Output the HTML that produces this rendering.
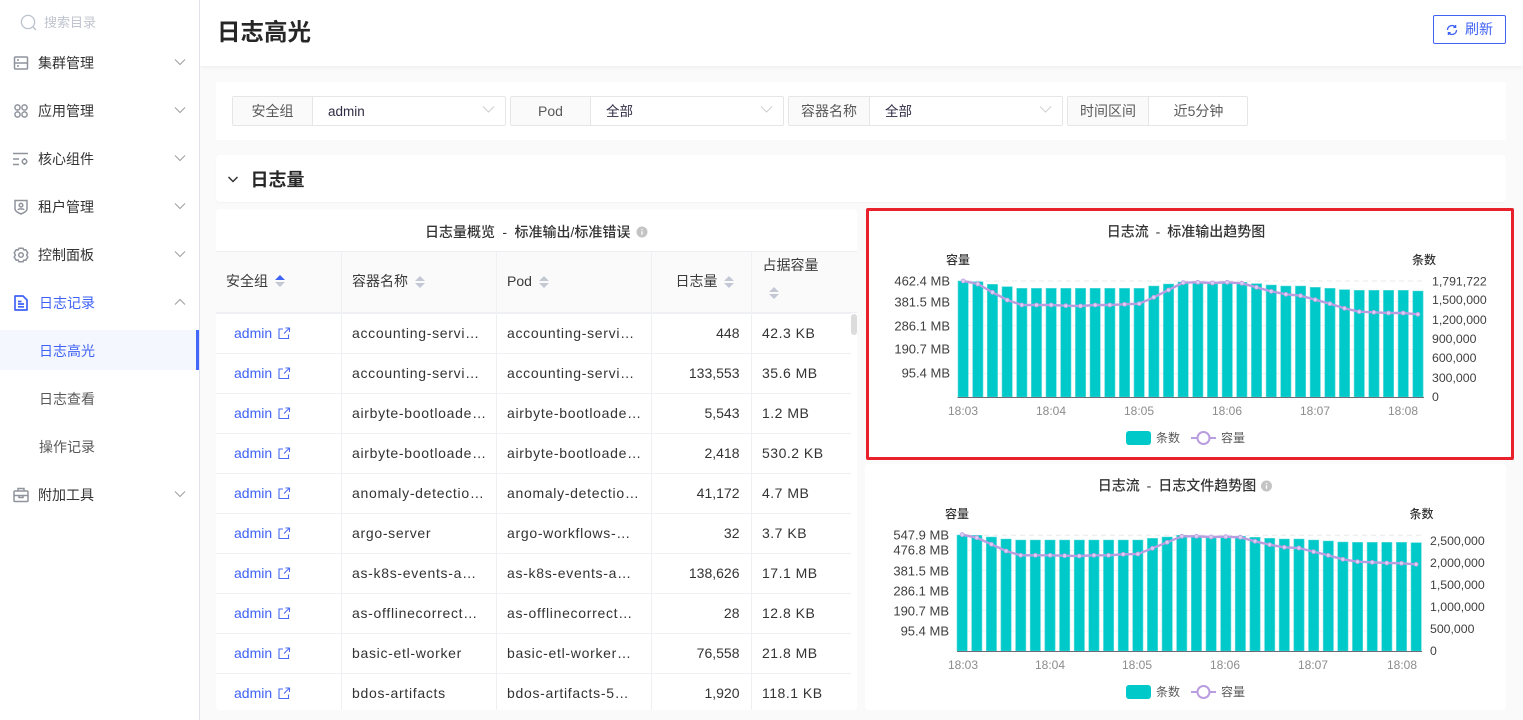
<!DOCTYPE html>
<html lang="zh-CN">
<head>
<meta charset="utf-8">
<title>日志高光</title>
<style>
*{box-sizing:border-box}
html,body{margin:0;padding:0;width:1523px;height:720px;overflow:hidden;background:#fafafa;font-family:"Liberation Sans","Noto Sans CJK SC",sans-serif;font-size:14px;color:#333}
.abs{position:absolute}
#side{left:0;top:0;width:200px;height:720px;background:#fff;border-right:1px solid #e1e3ec}
.mi{position:absolute;left:38px;width:120px;height:24px;line-height:24px;font-size:14px;color:#333;white-space:nowrap}
.ic{position:absolute;left:13px;width:16px;height:16px;fill:none;stroke:#8f939c;stroke-width:1.5}
.cv{position:absolute;left:174px;width:12px;height:8px;fill:none;stroke:#a0a0a0;stroke-width:1.1}
#head{left:200px;top:0;width:1323px;height:66px;background:#fff;box-shadow:0 1px 4px rgba(0,0,0,.06)}
#head h1{position:absolute;left:17px;top:14px;margin:0;font-size:23.5px;line-height:36px;font-weight:600;color:#262626}
#refresh{left:1433px;top:15px;width:73px;height:29px;border:1px solid #3f62f5;border-radius:2px;background:#fff;color:#3f62f5;line-height:27px;padding-left:31px;font-size:14px}
.panel{position:absolute;background:#fff}
.g{position:absolute;top:96px;height:30px;border:1px solid #e6e6e6;border-radius:2px;background:#fff;font-size:14px;line-height:28px}
.g b{position:absolute;left:0;top:0;bottom:0;font-weight:400;background:#fafafa;border-right:1px solid #e6e6e6;text-align:center;color:#595959}
.g i{position:absolute;top:1px;font-style:normal;color:#2e2b45;font-size:13.5px}
.g svg{position:absolute;top:8px;width:13px;height:9px;fill:none;stroke:#cfcfcf;stroke-width:1}
table{position:absolute;left:216px;top:251px;width:635px;border-collapse:collapse;table-layout:fixed;font-size:14px}
th{height:62px;padding:0 0 2px;font-weight:400;text-align:left;border-right:1px solid #eef0f4;border-bottom:1px solid #eef0f4;position:relative;color:#3a3a3a;white-space:nowrap}
td{height:40px;padding:0;border-right:1px solid #eef0f4;border-bottom:1px solid #eef0f4;white-space:nowrap;overflow:hidden;color:#333}
.c2{padding-left:10.5px}
td.c2{letter-spacing:.7px}
.c4{text-align:right;padding-right:11px}
.c5{padding-left:10.5px;border-right:0}
td.c5{letter-spacing:.5px}
.l{color:#3f62f5;padding-left:18px}
.l svg{width:12px;height:12px;margin-left:6px;vertical-align:-1px;fill:none;stroke:#4a6cf2;stroke-width:1.1}
.s{position:absolute;width:10px;height:12px}
text{font-family:"Liberation Sans","Noto Sans CJK SC",sans-serif}
</style>
</head>
<body>

<div class="abs" id="head"><h1>日志高光</h1></div>
<div class="abs" id="refresh">刷新
<svg style="position:absolute;left:12px;top:8px;width:12px;height:12px;fill:none;stroke:#3f62f5;stroke-width:1.3" viewBox="0 0 12 12"><path d="M1.5 6a4.5 4.5 0 0 1 7.8-3M10.5 6a4.5 4.5 0 0 1-7.8 3"/><path d="M9.6 1v2.3H7.4M2.4 11V8.7h2.2"/></svg></div>

<div class="abs" id="side">
  <svg class="abs" style="left:20px;top:14px;width:17px;height:17px;fill:none;stroke:#bcc2cd;stroke-width:1.3" viewBox="0 0 17 17"><circle cx="8" cy="8" r="6.600"/><path d="M13 13l3 3"/></svg>
  <div class="abs" style="left:44px;top:13px;font-size:13px;line-height:20px;color:#c0c4ce">搜索目录</div>

  <svg class="ic" style="top:55px" viewBox="0 0 16 16"><rect x="1.500" y="2" width="13" height="12" rx="1"/><path d="M1.500 8h13M4 5h2M4 11h2"/></svg>
  <div class="mi" style="top:51px">集群管理</div>
  <svg class="cv" style="top:58px" viewBox="0 0 12 8"><path d="M1 1.500l5 5 5-5"/></svg>

  <svg class="ic" style="top:103px" viewBox="0 0 16 16"><circle cx="4.500" cy="4.500" r="2.600"/><circle cx="11.500" cy="4.500" r="2.600"/><circle cx="4.500" cy="11.500" r="2.600"/><circle cx="11.500" cy="11.500" r="2.600"/></svg>
  <div class="mi" style="top:99px">应用管理</div>
  <svg class="cv" style="top:106px" viewBox="0 0 12 8"><path d="M1 1.500l5 5 5-5"/></svg>

  <svg class="ic" style="top:151px" viewBox="0 0 16 16"><path d="M0 2.500h15M0 8h6M0 13.500h6"/><circle cx="11.500" cy="10.500" r="2.200"/><path d="M11.500 7v1.200M11.500 12.800V14M8.500 10.500h.8M13.700 10.500h.8"/></svg>
  <div class="mi" style="top:147px">核心组件</div>
  <svg class="cv" style="top:154px" viewBox="0 0 12 8"><path d="M1 1.500l5 5 5-5"/></svg>

  <svg class="ic" style="top:199px" viewBox="0 0 16 16"><path d="M2 1.500h12v8.500c0 2-3 3.800-6 5-3-1.200-6-3-6-5z"/><circle cx="8" cy="6.200" r="1.800"/><path d="M5 11c.5-1.500 5.500-1.500 6 0"/></svg>
  <div class="mi" style="top:195px">租户管理</div>
  <svg class="cv" style="top:202px" viewBox="0 0 12 8"><path d="M1 1.500l5 5 5-5"/></svg>

  <svg class="ic" style="top:247px" viewBox="0 0 16 16"><path d="M6 1.200h4l.8 1.800 2-.3 2 3.300-1.200 2 1.200 2-2 3.300-2-.3-.8 1.800H6l-.8-1.800-2 .3-2-3.300 1.200-2-1.200-2 2-3.300 2 .3z" stroke-linejoin="round"/><circle cx="8" cy="8" r="2.300"/></svg>
  <div class="mi" style="top:243px">控制面板</div>
  <svg class="cv" style="top:250px" viewBox="0 0 12 8"><path d="M1 1.500l5 5 5-5"/></svg>

  <svg class="ic" style="top:295px;stroke:#3f62f5;stroke-width:1.700" viewBox="0 0 16 16"><path d="M2 1h8l4 4v10H2z" stroke-linejoin="round"/><path d="M5 6.500h3.500M5 9h6M5 11.800h6"/></svg>
  <div class="mi" style="top:291px;left:39px;color:#3f62f5">日志记录</div>
  <svg class="cv" style="top:298px" viewBox="0 0 12 8"><path d="M1 6.500l5-5 5 5"/></svg>

  <div class="abs" style="left:0;top:330px;width:199px;height:40px;background:#f5f7fe"></div>
  <div class="abs" style="left:196px;top:330px;width:3px;height:40px;background:#4467fb"></div>
  <div class="mi" style="top:339px;left:39px;color:#3f62f5">日志高光</div>
  <div class="mi" style="top:387px;left:39px;color:#595959">日志查看</div>
  <div class="mi" style="top:435px;left:39px;color:#595959">操作记录</div>

  <svg class="ic" style="top:487px" viewBox="0 0 16 16"><rect x="1" y="4" width="14" height="10.500" rx="1"/><path d="M5 4V1.500h6V4M1 8.500h14M6 8.500v2h4v-2"/></svg>
  <div class="mi" style="top:483px">附加工具</div>
  <svg class="cv" style="top:490px" viewBox="0 0 12 8"><path d="M1 1.500l5 5 5-5"/></svg>
</div>

<div class="panel" style="left:216px;top:82px;width:1290px;height:58px"></div>

<div class="g" style="left:232px;width:274px"><b style="width:80px">安全组</b><i style="left:95px">admin</i><svg style="left:249px" viewBox="0 0 13 9"><path d="M1 1.500l5.500 5.500L12 1.500"/></svg></div>
<div class="g" style="left:510px;width:274px"><b style="width:80px">Pod</b><i style="left:95px">全部</i><svg style="left:249px" viewBox="0 0 13 9"><path d="M1 1.500l5.500 5.500L12 1.500"/></svg></div>
<div class="g" style="left:788px;width:275px"><b style="width:81px">容器名称</b><i style="left:96px">全部</i><svg style="left:250px" viewBox="0 0 13 9"><path d="M1 1.500l5.500 5.500L12 1.500"/></svg></div>
<div class="g" style="left:1067px;width:181px"><b style="width:81px">时间区间</b><i style="left:81px;width:99px;text-align:center;color:#595959;font-size:14px;top:0">近5分钟</i></div>

<div class="panel" style="left:216px;top:155px;width:1290px;height:47px;border-radius:4px;box-shadow:0 1px 2px rgba(0,0,0,.03)"></div>
<svg class="abs" style="left:227px;top:175px;width:12px;height:9px;fill:none;stroke:#333;stroke-width:1.500" viewBox="0 0 12 9"><path d="M1.500 2l4.500 4.500L10.500 2"/></svg>
<div class="abs" style="left:250.500px;top:167px;font-size:18px;line-height:27px;font-weight:600;color:#262626">日志量</div>

<div class="panel" style="left:216px;top:209px;width:641px;height:501px;border-radius:4px;overflow:hidden"></div>
<div class="abs" style="left:425px;top:222px;font-size:14px;line-height:20px;font-weight:500;color:#333;white-space:nowrap;word-spacing:3.500px">日志量概览 - 标准输出/标准错误</div>
<svg class="abs" style="left:636px;top:226px;width:12px;height:12px" viewBox="0 0 12 12"><circle cx="6" cy="6" r="5.500" fill="#c4c4c4"/><path d="M6 5.200v3.600M6 3v1.100" stroke="#fff" stroke-width="1.300"/></svg>

<div class="abs" style="left:216px;top:251px;width:641px;height:62px;background:#fafafa;border-top:1px solid #eef0f4;border-bottom:1px solid #eef0f4"></div>

<div class="abs" style="left:216px;top:251px;width:641px;height:459px;overflow:hidden">
<table style="left:0;top:0">
<colgroup><col style="width:125px"><col style="width:155px"><col style="width:155px"><col style="width:100px"><col style="width:100px"></colgroup>
<thead><tr>
<th style="padding-left:10px">安全组</th>
<th class="c2">容器名称</th>
<th class="c2">Pod</th>
<th class="c4" style="padding-right:33px">日志量</th>
<th class="c5" style="vertical-align:top;padding-top:4px;padding-left:11px">占据容量</th>
</tr></thead>
<tbody>
<tr><td class="l">admin<svg viewBox="0 0 12 12"><path d="M5 2H1v9.500h9.500V7.500M6 6.500L11 1.500M7.500 1H11.500V5"/></svg></td><td class="c2">accounting-servi…</td><td class="c2">accounting-servi…</td><td class="c4">448</td><td class="c5">42.3 KB</td></tr>
<tr><td class="l">admin<svg viewBox="0 0 12 12"><path d="M5 2H1v9.500h9.500V7.500M6 6.500L11 1.500M7.500 1H11.500V5"/></svg></td><td class="c2">accounting-servi…</td><td class="c2">accounting-servi…</td><td class="c4">133,553</td><td class="c5">35.6 MB</td></tr>
<tr><td class="l">admin<svg viewBox="0 0 12 12"><path d="M5 2H1v9.500h9.500V7.500M6 6.500L11 1.500M7.500 1H11.500V5"/></svg></td><td class="c2">airbyte-bootloade…</td><td class="c2">airbyte-bootloade…</td><td class="c4">5,543</td><td class="c5">1.2 MB</td></tr>
<tr><td class="l">admin<svg viewBox="0 0 12 12"><path d="M5 2H1v9.500h9.500V7.500M6 6.500L11 1.500M7.500 1H11.500V5"/></svg></td><td class="c2">airbyte-bootloade…</td><td class="c2">airbyte-bootloade…</td><td class="c4">2,418</td><td class="c5">530.2 KB</td></tr>
<tr><td class="l">admin<svg viewBox="0 0 12 12"><path d="M5 2H1v9.500h9.500V7.500M6 6.500L11 1.500M7.500 1H11.500V5"/></svg></td><td class="c2">anomaly-detectio…</td><td class="c2">anomaly-detectio…</td><td class="c4">41,172</td><td class="c5">4.7 MB</td></tr>
<tr><td class="l">admin<svg viewBox="0 0 12 12"><path d="M5 2H1v9.500h9.500V7.500M6 6.500L11 1.500M7.500 1H11.500V5"/></svg></td><td class="c2">argo-server</td><td class="c2">argo-workflows-…</td><td class="c4">32</td><td class="c5">3.7 KB</td></tr>
<tr><td class="l">admin<svg viewBox="0 0 12 12"><path d="M5 2H1v9.500h9.500V7.500M6 6.500L11 1.500M7.500 1H11.500V5"/></svg></td><td class="c2">as-k8s-events-a…</td><td class="c2">as-k8s-events-a…</td><td class="c4">138,626</td><td class="c5">17.1 MB</td></tr>
<tr><td class="l">admin<svg viewBox="0 0 12 12"><path d="M5 2H1v9.500h9.500V7.500M6 6.500L11 1.500M7.500 1H11.500V5"/></svg></td><td class="c2">as-offlinecorrect…</td><td class="c2">as-offlinecorrect…</td><td class="c4">28</td><td class="c5">12.8 KB</td></tr>
<tr><td class="l">admin<svg viewBox="0 0 12 12"><path d="M5 2H1v9.500h9.500V7.500M6 6.500L11 1.500M7.500 1H11.500V5"/></svg></td><td class="c2">basic-etl-worker</td><td class="c2">basic-etl-worker…</td><td class="c4">76,558</td><td class="c5">21.8 MB</td></tr>
<tr><td class="l">admin<svg viewBox="0 0 12 12"><path d="M5 2H1v9.500h9.500V7.500M6 6.500L11 1.500M7.500 1H11.500V5"/></svg></td><td class="c2">bdos-artifacts</td><td class="c2">bdos-artifacts-5…</td><td class="c4">1,920</td><td class="c5">118.1 KB</td></tr>
</tbody>
</table>
</div>
<div class="abs" style="left:851px;top:314px;width:6px;height:21px;border-radius:3px;background:#dcdcdc"></div>

<svg class="s" style="left:275px;top:275px" viewBox="0 0 10 12"><path d="M5 0l5 5H0z" fill="#3f62f5"/><path d="M5 12l5-5H0z" fill="#c3c8d4"/></svg>
<svg class="s" style="left:415px;top:276px" viewBox="0 0 10 12"><path d="M5 0l5 5H0zM5 12l5-5H0z" fill="#c3c8d4"/></svg>
<svg class="s" style="left:539px;top:276px" viewBox="0 0 10 12"><path d="M5 0l5 5H0zM5 12l5-5H0z" fill="#c3c8d4"/></svg>
<svg class="s" style="left:724px;top:276px" viewBox="0 0 10 12"><path d="M5 0l5 5H0zM5 12l5-5H0z" fill="#c3c8d4"/></svg>
<svg class="s" style="left:769px;top:287px" viewBox="0 0 10 12"><path d="M5 0l5 5H0zM5 12l5-5H0z" fill="#c3c8d4"/></svg>

<div class="panel" style="left:865px;top:464px;width:641px;height:246px;border-radius:4px"></div>
<div class="abs" style="left:866px;top:208px;width:648px;height:252px;background:#fff;border:3.500px solid #e8212a;border-radius:2px"></div>

<svg class="abs" style="left:0;top:0;width:1523px;height:720px" viewBox="0 0 1523 720">
<defs>
<marker id="dot" markerUnits="userSpaceOnUse" markerWidth="7" markerHeight="7" refX="3.500" refY="3.500" viewBox="0 0 7 7"><circle cx="3.500" cy="3.500" r="2" fill="#dccdf1" stroke="#b99de0" stroke-width=".8"/></marker>
</defs>

<!-- chart 1 -->
<text x="1186" y="236.500" text-anchor="middle" font-size="14" font-weight="500" fill="#333" word-spacing="3">日志流 - 标准输出趋势图</text>
<text x="958" y="264" text-anchor="middle" font-size="12" font-weight="500" fill="#333">容量</text>
<text x="1424" y="264" text-anchor="middle" font-size="12" font-weight="500" fill="#333">条数</text>
<path d="M958 281H1424" stroke="#e8e8e8" stroke-dasharray="5 4"/>
<path d="M958 301.500H1424M958 325.500H1424M958 349.500H1424M958 373.500H1424" stroke="#f2f2f2"/>
<path fill="#00c9c9" stroke="#5fdcdc" stroke-width=".6" d="M958 397V281h10.300V397zM972.700 397V281.700h10.300V397zM987.300 397V284.300h10.300V397zM1002 397V286.700h10.300V397zM1016.700 397V288.300h10.300V397zM1031.300 397V288.300h10.300V397zM1046 397V288.300h10.300V397zM1060.700 397V288.300h10.300V397zM1075.400 397V288.300h10.300V397zM1090 397V288.300h10.300V397zM1104.700 397V288.300h10.300V397zM1119.400 397V288.300h10.300V397zM1134 397V288.300h10.300V397zM1148.700 397V286h10.300V397zM1163.400 397V284h10.300V397zM1178 397V282h10.300V397zM1192.700 397V282.300h10.300V397zM1207.400 397V282.300h10.300V397zM1222.100 397V282.300h10.300V397zM1236.700 397V282.300h10.300V397zM1251.400 397V283.700h10.300V397zM1266.100 397V285h10.300V397zM1280.700 397V286h10.300V397zM1295.400 397V286h10.300V397zM1310.100 397V287.300h10.300V397zM1324.800 397V288.300h10.300V397zM1339.400 397V289.700h10.300V397zM1354.100 397V290.300h10.300V397zM1368.800 397V290.300h10.300V397zM1383.400 397V290.300h10.300V397zM1398.100 397V290.300h10.300V397zM1412.800 397V291h10.300V397z"/>
<path d="M957.500 397.500H1424" stroke="#6b6b75"/>
<polyline fill="none" stroke="#b99de0" stroke-width="2.400" stroke-linejoin="round" marker-start="url(#dot)" marker-mid="url(#dot)" marker-end="url(#dot)" points="963.200,281 977.800,284 992.500,292.300 1007.200,300 1021.800,305 1036.500,305 1051.200,305 1065.800,305.700 1080.500,306 1095.200,305 1109.800,305 1124.500,304.300 1139.200,303.700 1153.800,297.300 1168.500,290 1183.200,282.700 1197.900,282.300 1212.500,283 1227.200,282.300 1241.900,283.300 1256.500,287.300 1271.200,291.300 1285.900,294.300 1300.500,295.700 1315.200,299.700 1329.900,303.700 1344.500,308.300 1359.200,311.700 1373.900,312.300 1388.500,313 1403.200,313 1417.900,314.300"/>
<g font-size="13" fill="#404040" text-anchor="end">
<text x="950" y="285.500">462.4 MB</text><text x="950" y="306.500">381.5 MB</text><text x="950" y="330.500">286.1 MB</text><text x="950" y="353.500">190.7 MB</text><text x="950" y="377.500">95.4 MB</text>
</g>
<g font-size="12.300" fill="#404040">
<text x="1432" y="285.500">1,791,722</text><text x="1432" y="304">1,500,000</text><text x="1432" y="324">1,200,000</text><text x="1432" y="343">900,000</text><text x="1432" y="362">600,000</text><text x="1432" y="382">300,000</text><text x="1432" y="401">0</text>
</g>
<g font-size="12" fill="#8c8c8c" text-anchor="middle">
<text x="963" y="415">18:03</text><text x="1051" y="415">18:04</text><text x="1139" y="415">18:05</text><text x="1227" y="415">18:06</text><text x="1315" y="415">18:07</text><text x="1403" y="415">18:08</text>
</g>
<rect x="1126" y="431" width="25" height="14" rx="3" fill="#00c9c9"/>
<text x="1156" y="442" font-size="12" fill="#595959">条数</text>
<path d="M1191 438H1216" stroke="#b99de0" stroke-width="2"/><circle cx="1203.500" cy="438" r="6" fill="#fff" stroke="#b99de0" stroke-width="2"/>
<text x="1221" y="442" font-size="12" fill="#595959">容量</text>

<!-- chart 2 -->
<text x="1177" y="490.500" text-anchor="middle" font-size="14" font-weight="500" fill="#333" word-spacing="3">日志流 - 日志文件趋势图</text>
<circle cx="1266.500" cy="486" r="5.500" fill="#c4c4c4"/><path d="M1266.500 485.200v3.600M1266.500 483v1.100" stroke="#fff" stroke-width="1.300"/>
<text x="957" y="518" text-anchor="middle" font-size="12" font-weight="500" fill="#333">容量</text>
<text x="1421.500" y="518" text-anchor="middle" font-size="12" font-weight="500" fill="#333">条数</text>
<path d="M957 535.300H1422" stroke="#e8e8e8" stroke-dasharray="5 4"/>
<path d="M957 550.500H1422M957 570.500H1422M957 590.500H1422M957 610.500H1422M957 631H1422" stroke="#f2f2f2"/>
<g transform="translate(-1 0) translate(958 0) scale(.9983 1) translate(-958 0)">
<path fill="#00c9c9" stroke="#5fdcdc" stroke-width=".6" d="M958 651V535h10.300V651zM972.700 651V535.300h10.300V651zM987.300 651V537h10.300V651zM1002 651V539h10.300V651zM1016.700 651V540h10.300V651zM1031.300 651V540h10.300V651zM1046 651V540h10.300V651zM1060.700 651V540h10.300V651zM1075.400 651V540h10.300V651zM1090 651V540h10.300V651zM1104.700 651V540h10.300V651zM1119.400 651V540h10.300V651zM1134 651V540h10.300V651zM1148.700 651V538.300h10.300V651zM1163.400 651V537h10.300V651zM1178 651V535.300h10.300V651zM1192.700 651V536h10.300V651zM1207.400 651V536.300h10.300V651zM1222.100 651V536.300h10.300V651zM1236.700 651V536.300h10.300V651zM1251.400 651V537.300h10.300V651zM1266.100 651V538.300h10.300V651zM1280.700 651V539h10.300V651zM1295.400 651V539h10.300V651zM1310.100 651V540h10.300V651zM1324.800 651V541h10.300V651zM1339.400 651V542h10.300V651zM1354.100 651V542.300h10.300V651zM1368.800 651V542.300h10.300V651zM1383.400 651V542.300h10.300V651zM1398.100 651V542.300h10.300V651zM1412.800 651V542.700h10.300V651z"/>
<polyline fill="none" stroke="#b99de0" stroke-width="2.400" stroke-linejoin="round" marker-start="url(#dot)" marker-mid="url(#dot)" marker-end="url(#dot)" points="963.200,534.700 977.800,537.700 992.500,544.300 1007.200,551 1021.800,555.300 1036.500,555.300 1051.200,555.300 1065.800,555.700 1080.500,556 1095.200,555.300 1109.800,555.300 1124.500,554.300 1139.200,554 1153.800,548.300 1168.500,542.300 1183.200,536.300 1197.900,536.300 1212.500,537 1227.200,536.700 1241.900,537.300 1256.500,541.300 1271.200,544.700 1285.900,547.300 1300.500,548 1315.200,551.700 1329.900,555.300 1344.500,559.300 1359.200,561.700 1373.900,562.300 1388.500,563 1403.200,563.300 1417.900,564.300"/>
</g>
<path d="M957 651.500H1422" stroke="#6b6b75"/>
<g font-size="13" fill="#404040" text-anchor="end">
<text x="949" y="539.500">547.9 MB</text><text x="949" y="554.500">476.8 MB</text><text x="949" y="575.500">381.5 MB</text><text x="949" y="595.500">286.1 MB</text><text x="949" y="615.500">190.7 MB</text><text x="949" y="635.500">95.4 MB</text>
</g>
<g font-size="12.300" fill="#404040">
<text x="1430" y="545">2,500,000</text><text x="1430" y="567">2,000,000</text><text x="1430" y="589">1,500,000</text><text x="1430" y="611">1,000,000</text><text x="1430" y="633">500,000</text><text x="1430" y="655">0</text>
</g>
<g font-size="12" fill="#8c8c8c" text-anchor="middle">
<text x="963" y="669">18:03</text><text x="1050" y="669">18:04</text><text x="1137" y="669">18:05</text><text x="1225" y="669">18:06</text><text x="1313" y="669">18:07</text><text x="1402" y="669">18:08</text>
</g>
<rect x="1126" y="685" width="25" height="14" rx="3" fill="#00c9c9"/>
<text x="1156" y="696" font-size="12" fill="#595959">条数</text>
<path d="M1191 692H1216" stroke="#b99de0" stroke-width="2"/><circle cx="1203.500" cy="692" r="6" fill="#fff" stroke="#b99de0" stroke-width="2"/>
<text x="1221" y="696" font-size="12" fill="#595959">容量</text>
</svg>

</body>
</html>
